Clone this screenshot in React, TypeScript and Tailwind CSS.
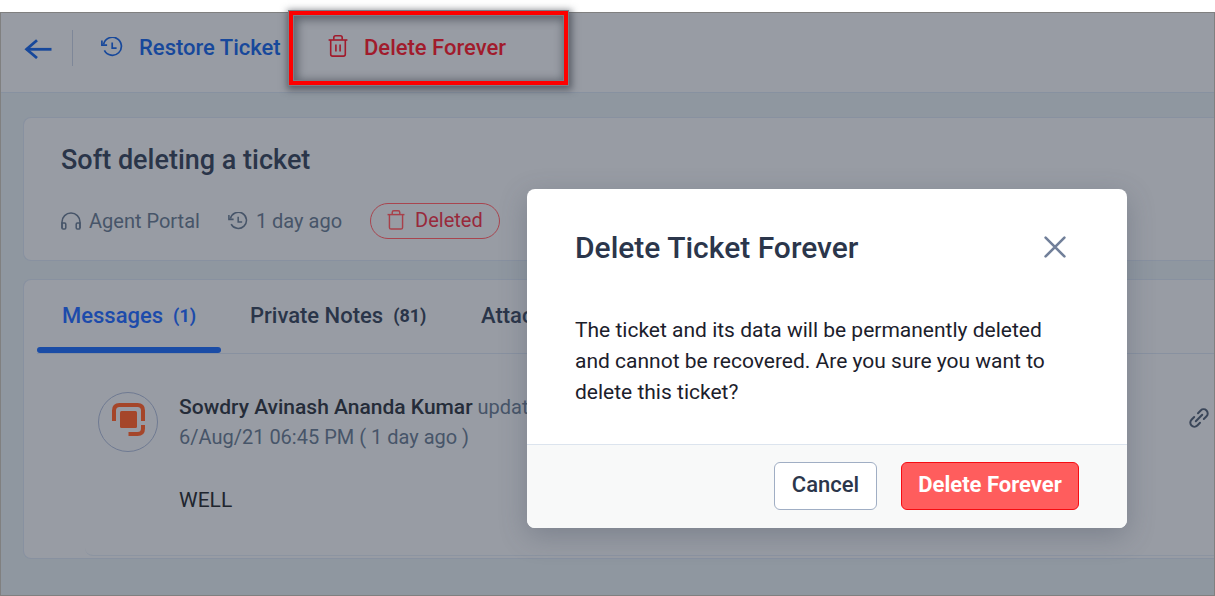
import type { ReactNode } from "react";

type IconProps = { className?: string };

function BackIcon({ className }: IconProps) {
  return (
    <svg viewBox="0 0 28 20" className={className} fill="none" stroke="currentColor" strokeWidth="2.8">
      <path d="M27.5 10.3H2.4" />
      <path d="M13 1.2 2.6 10.3 13 19" />
    </svg>
  );
}

function HistoryIcon({ className }: IconProps) {
  return (
    <svg viewBox="0 0 22 20" className={className} fill="none" stroke="currentColor" strokeWidth="1.7">
      <path d="M2.6 7.4A9 9 0 1 1 3.4 13.4" />
      <path d="M.9 3.4v4.8h5.2" />
      <path d="M11.2 5.4v5.8h4.4" />
    </svg>
  );
}

function TrashIcon({ className, lined }: IconProps & { lined?: boolean }) {
  return (
    <svg viewBox="0 0 20 22" className={className} fill="none" stroke="currentColor" strokeWidth="1.6">
      <path d="M.6 5h18.8" />
      <path d="M2.7 5v14.2c0 1.1.8 1.9 1.9 1.9h10.8c1.1 0 1.9-.8 1.9-1.9V5" />
      <path d="M5.8 4.8V2.7C5.8 1.6 6.5.8 7.6.8h4.8c1.1 0 1.8.8 1.8 1.9v2.1" />
      {lined && <path d="M7.9 9.4v7.2M12.1 9.4v7.2" />}
    </svg>
  );
}

function HeadsetIcon({ className }: IconProps) {
  return (
    <svg viewBox="0 0 20 18" className={className} fill="none" stroke="currentColor" strokeWidth="1.5">
      <path d="M1 16V10a9 9 0 0 1 18 0v6" />
      <path d="M1 11h2.6c.8 0 1.2.4 1.2 1.2v3.6c0 .8-.4 1.3-1.2 1.3H2.2C1.4 17.1 1 16.7 1 16zM19 11h-2.6c-.8 0-1.2.4-1.2 1.2v3.6c0 .8.4 1.3 1.2 1.3h1.4c.8 0 1.2-.4 1.2-1.1z" />
    </svg>
  );
}

function LinkIcon({ className }: IconProps) {
  return (
    <svg
      viewBox="0 0 20 20"
      className={className}
      fill="none"
      stroke="currentColor"
      strokeWidth="2"
      strokeLinecap="round"
    >
      <path d="m6.8 13.2 6.4-6.4" />
      <path d="m9 5.2 2.7-2.7a4 4 0 0 1 5.8 5.8L14.8 11" />
      <path d="m5.2 9-2.7 2.7a4 4 0 0 0 5.8 5.8l2.7-2.7" />
    </svg>
  );
}

function CloseIcon({ className }: IconProps) {
  return (
    <svg
      viewBox="0 0 22 22"
      className={className}
      fill="none"
      stroke="currentColor"
      strokeWidth="2.6"
      strokeLinecap="round"
    >
      <path d="m1.6 1.6 18.8 18.8M20.4 1.6 1.6 20.4" />
    </svg>
  );
}

function BrandMark({ className }: IconProps) {
  return (
    <svg viewBox="0 0 33 33" className={className}>
      <path d="M2 18V7.5Q2 2 7.5 2h18Q31 2 31 7.5V18" fill="none" stroke="#a5462a" strokeWidth="4" />
      <path d="M31 22v3.5Q31 31 25.5 31H16.5" fill="none" stroke="#a5462a" strokeWidth="4" />
      <rect x="8" y="8" width="17" height="17" rx="1.5" fill="#a5462a" />
    </svg>
  );
}

const TABS = [
  { label: "Messages", count: 1, className: "w-[184px] pl-[25px] text-[#1c4bab]", active: true },
  { label: "Private Notes", count: 81, className: "w-[231px] pl-[29px] text-[#2a3549]" },
  { label: "Attach", className: "pl-[29px] text-[#2a3549]" },
];

function Card({ className, children }: { className: string; children: ReactNode }) {
  return (
    <section className={"ml-[22px] rounded-l-lg border border-r-0 border-[#8891a0] bg-[#989ca4] " + className}>
      {children}
    </section>
  );
}

function Toolbar() {
  return (
    <header className="flex h-20 items-center border-b border-[#8791a0] bg-[#989ca4] pb-2.5 pl-[23px] text-[22px] leading-7 font-medium">
      <button type="button" aria-label="Back" className="mt-0.5 text-[#17489b]">
        <BackIcon className="h-5 w-7" />
      </button>
      <span className="ml-5 h-9 w-px bg-[#7e8798]" />
      <button type="button" className="ml-7 flex w-[187px] items-center gap-4 whitespace-nowrap text-[#17489b]">
        <HistoryIcon className="mb-0.5 h-5 w-[22px] shrink-0" />
        Restore Ticket
      </button>
      <button
        type="button"
        className="relative flex h-[76px] w-[281px] items-center gap-4 pl-10 whitespace-nowrap text-[#a11b2c]"
      >
        <span className="absolute inset-0 border border-[#7b7f86] shadow-[1px_2px_7px_2px_rgba(50,55,65,0.6)]">
          <span className="block h-full border-4 border-[#fe0000]">
            <span className="block h-full border border-[#7b7f86] shadow-[inset_2px_2px_9px_2px_rgba(60,65,75,0.6)]" />
          </span>
        </span>
        <TrashIcon lined className="relative mb-1 h-[22px] w-5" />
        <span className="relative">Delete Forever</span>
      </button>
    </header>
  );
}

function TicketSummary() {
  return (
    <Card className="mt-6 px-[37px] pt-6 pb-[21px]">
      <h1 className="text-[27px] leading-9 font-medium text-[#2a3549]">Soft deleting a ticket</h1>
      <div className="mt-[25px] flex items-center text-xl leading-6 text-[#475569]">
        <HeadsetIcon className="mr-2 h-[18px] w-5" />
        Agent Portal
        <HistoryIcon className="mr-2 ml-7 h-[18px] w-5" />
        1 day ago
        <span className="ml-7 flex h-9 items-center gap-2.5 rounded-full border border-[#a8454f] px-4 pb-0.5 text-[#98293b]">
          <TrashIcon className="h-5 w-[18px] text-[#a8404a]" />
          Deleted
        </span>
      </div>
    </Card>
  );
}

function Conversation() {
  return (
    <Card className="mt-[18px]">
      <nav className="ml-[13px] flex h-[74px] items-stretch border-b border-[#8891a0] pb-0 text-[22px] leading-7 font-medium">
        {TABS.map((tab) => (
          <button
            key={tab.label}
            type="button"
            className={"relative flex items-center pb-0.5 whitespace-nowrap " + tab.className}
          >
            {tab.label}
            {tab.count && <span className="ml-2.5 text-lg font-bold">({tab.count})</span>}
            {tab.active && <span className="absolute inset-x-0 bottom-0 h-1.5 rounded-full bg-[#1a4ca6]" />}
          </button>
        ))}
      </nav>
      <article className="ml-[61px] flex h-[202px] items-start rounded-bl-lg border-b border-[#8c94a1] pt-[38px] pr-[5px] pl-[13px]">
        <div className="flex size-[60px] shrink-0 items-center justify-center rounded-full border border-[#6f7a92] pb-1.5">
          <BrandMark className="size-[33px]" />
        </div>
        <div className="ml-[21px] grow text-xl leading-[30px] text-[#475569]">
          <p className="whitespace-nowrap">
            <span className="text-[21px] font-medium text-[#252c39]">Sowdry Avinash Ananda Kumar</span> updated
          </p>
          <p>6/Aug/21 06:45 PM ( 1 day ago )</p>
          <p className="mt-[33px] text-[21px] text-[#20252e]">WELL</p>
        </div>
        <button type="button" aria-label="Copy link" className="mt-4 text-[#3a4659]">
          <LinkIcon className="size-5" />
        </button>
      </article>
      <div className="h-0.5" />
    </Card>
  );
}

function DeleteDialog() {
  return (
    <div className="absolute inset-0 flex items-start justify-end pt-[189px] pr-[88px]">
      <div
        role="dialog"
        aria-labelledby="dialog-title"
        className="w-[600px] overflow-hidden rounded-lg bg-white shadow-[0_8px_28px_rgba(60,70,90,0.3)]"
      >
        <div className="flex items-start justify-between pt-[41px] pr-[61px] pl-12">
          <h2 id="dialog-title" className="text-[30px] leading-9 font-medium text-[#2b364b]">
            Delete Ticket Forever
          </h2>
          <button type="button" aria-label="Close" className="mt-1.5 text-[#72809a]">
            <CloseIcon className="size-[22px]" />
          </button>
        </div>
        <p className="mt-[49px] px-12 pb-9 text-[21px] leading-[31px] text-[#1b202b]">
          The ticket and its data will be permanently deleted and cannot be recovered. Are you sure you want to delete
          this ticket?
        </p>
        <div className="flex justify-end gap-6 border-t border-[#dce4ee] bg-[#f8f9f9] pt-[17px] pr-12 pb-[18px] text-[22px]">
          <button
            type="button"
            className="h-12 w-[103px] rounded-md border border-[#a0aec4] bg-white pb-1 font-medium text-[#2b364b]"
          >
            Cancel
          </button>
          <button
            type="button"
            className="h-12 w-[178px] rounded-md border border-[#f60c12] bg-[#ff5d5d] pb-1 font-bold whitespace-nowrap text-white"
          >
            Delete Forever
          </button>
        </div>
      </div>
    </div>
  );
}

export default function App() {
  return (
    <div className="relative flex min-h-screen flex-col overflow-hidden bg-white pt-3 font-[Roboto,sans-serif]">
      <main className="grow border border-[#808080] bg-[#8f97a0]">
        <Toolbar />
        <TicketSummary />
        <Conversation />
      </main>
      <DeleteDialog />
    </div>
  );
}
